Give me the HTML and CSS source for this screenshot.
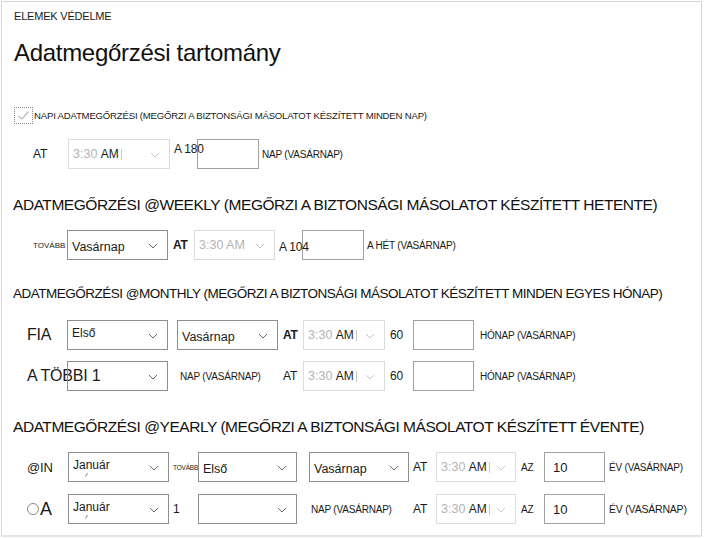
FILE: index.html
```html
<!DOCTYPE html>
<html lang="hu">
<head>
<meta charset="utf-8">
<title>Elemek védelme</title>
<link rel="stylesheet" href="styles.css">
</head>
<body>
<div class="panel">
  <div class="eyebrow">ELEMEK VÉDELME</div>
  <h1 class="title">Adatmegőrzési tartomány</h1>

  <div class="checkrow">
    <span class="checkbox"><svg width="13" height="11" viewBox="0 0 13 11"><path d="M1.5 6 L5 9 L11.5 1.5" fill="none" stroke="#b8b8b8" stroke-width="1.2"/></svg></span>
    <span class="small cb">NAPI ADATMEGŐRZÉSI (MEGŐRZI A BIZTONSÁGI MÁSOLATOT KÉSZÍTETT MINDEN NAP)</span>
  </div>

  <div class="row r1">
    <span class="lbl w35 x33">AT</span>
    <span class="sel dis w102"><span class="g">3:30</span>&nbsp;<span class="d">AM</span><span class="caret"></span><svg class="chev" width="10" height="6" viewBox="0 0 10 6"><path d="M1 1 L5 5 L9 1" fill="none" stroke="#c8c8c8" stroke-width="1"/></svg></span>
    <span class="lbl ml4 w23 up">A 180</span>
    <span class="inp w62"></span>
    <span class="small ml3">NAP (VASÁRNAP)</span>
  </div>

  <h2 class="sect big">ADATMEGŐRZÉSI @WEEKLY (MEGŐRZI A BIZTONSÁGI MÁSOLATOT KÉSZÍTETT HETENTE)</h2>

  <div class="row r2">
    <span class="tiny t8 w34 x33">TOVÁBB</span>
    <span class="sel w101 low"><span class="d">Vasárnap</span><svg class="chev" width="10" height="6" viewBox="0 0 10 6"><path d="M1 1 L5 5 L9 1" fill="none" stroke="#666" stroke-width="1"/></svg></span>
    <span class="lbl bold ml5 w21">AT</span>
    <span class="sel dis w81"><span class="g">3:30 AM</span><svg class="chev" width="10" height="6" viewBox="0 0 10 6"><path d="M1 1 L5 5 L9 1" fill="none" stroke="#c8c8c8" stroke-width="1"/></svg></span>
    <span class="lbl ml4 w23 dn">A 104</span>
    <span class="inp w62"></span>
    <span class="small ml3">A HÉT (VASÁRNAP)</span>
  </div>

  <h2 class="sect mid">ADATMEGŐRZÉSI @MONTHLY (MEGŐRZI A BIZTONSÁGI MÁSOLATOT KÉSZÍTETT MINDEN EGYES HÓNAP)</h2>

  <div class="row r3">
    <span class="lbl lg w40 x27">FIA</span>
    <span class="sel w101 top"><span class="d">Első</span><svg class="chev" width="10" height="6" viewBox="0 0 10 6"><path d="M1 1 L5 5 L9 1" fill="none" stroke="#666" stroke-width="1"/></svg></span>
    <span class="sel w101 ml9 low"><span class="d">Vasárnap</span><svg class="chev" width="10" height="6" viewBox="0 0 10 6"><path d="M1 1 L5 5 L9 1" fill="none" stroke="#666" stroke-width="1"/></svg></span>
    <span class="lbl bold ml5 w20">AT</span>
    <span class="sel dis w82"><span class="g">3:30</span>&nbsp;<span class="d">AM</span><span class="caret"></span><svg class="chev" width="10" height="6" viewBox="0 0 10 6"><path d="M1 1 L5 5 L9 1" fill="none" stroke="#c8c8c8" stroke-width="1"/></svg></span>
    <span class="lbl ml5 w23">60</span>
    <span class="inp w61"></span>
    <span class="small ml6">HÓNAP (VASÁRNAP)</span>
  </div>

  <div class="row r4">
    <span class="lbl lg w40 x27">A TÖBBI 1</span>
    <span class="sel w101"><svg class="chev" width="10" height="6" viewBox="0 0 10 6"><path d="M1 1 L5 5 L9 1" fill="none" stroke="#666" stroke-width="1"/></svg></span>
    <span class="small ml12 w103">NAP (VASÁRNAP)</span>
    <span class="lbl w20">AT</span>
    <span class="sel dis w82"><span class="g">3:30</span>&nbsp;<span class="d">AM</span><span class="caret"></span><svg class="chev" width="10" height="6" viewBox="0 0 10 6"><path d="M1 1 L5 5 L9 1" fill="none" stroke="#c8c8c8" stroke-width="1"/></svg></span>
    <span class="lbl ml5 w23">60</span>
    <span class="inp w61"></span>
    <span class="small ml6">HÓNAP (VASÁRNAP)</span>
  </div>

  <h2 class="sect big">ADATMEGŐRZÉSI @YEARLY (MEGŐRZI A BIZTONSÁGI MÁSOLATOT KÉSZÍTETT ÉVENTE)</h2>

  <div class="row r5">
    <span class="lbl w41 x27 l13">@IN</span>
    <span class="sel w101 top"><span class="d">Január</span><svg class="tick" width="3" height="4" viewBox="0 0 3 4"><path d="M2.5 0 L0.5 3.5" stroke="#666" stroke-width="0.8"/></svg><svg class="chev" width="10" height="6" viewBox="0 0 10 6"><path d="M1 1 L5 5 L9 1" fill="none" stroke="#666" stroke-width="1"/></svg></span>
    <span class="tiny ml4 w25">TOVÁBB</span>
    <span class="sel w99 low"><span class="d">Első</span><svg class="chev" width="10" height="6" viewBox="0 0 10 6"><path d="M1 1 L5 5 L9 1" fill="none" stroke="#666" stroke-width="1"/></svg></span>
    <span class="sel w100 ml12 low"><span class="d">Vasárnap</span><svg class="chev" width="10" height="6" viewBox="0 0 10 6"><path d="M1 1 L5 5 L9 1" fill="none" stroke="#666" stroke-width="1"/></svg></span>
    <span class="lbl ml4 w23">AT</span>
    <span class="sel dis w80"><span class="g">3:30</span>&nbsp;<span class="d">AM</span><span class="caret"></span><svg class="chev" width="10" height="6" viewBox="0 0 10 6"><path d="M1 1 L5 5 L9 1" fill="none" stroke="#c8c8c8" stroke-width="1"/></svg></span>
    <span class="small ml5 w23">AZ</span>
    <span class="inp w61 val">10</span>
    <span class="small ml4">ÉV (VASÁRNAP)</span>
  </div>

  <div class="row r6">
    <span class="radio x27"></span>
    <span class="lbl lg w28 ml1 l18">A</span>
    <span class="sel w101 top"><span class="d">Január</span><svg class="tick" width="3" height="4" viewBox="0 0 3 4"><path d="M2.5 0 L0.5 3.5" stroke="#666" stroke-width="0.8"/></svg><svg class="chev" width="10" height="6" viewBox="0 0 10 6"><path d="M1 1 L5 5 L9 1" fill="none" stroke="#666" stroke-width="1"/></svg></span>
    <span class="lbl ml4 w25">1</span>
    <span class="sel w99"><svg class="chev" width="10" height="6" viewBox="0 0 10 6"><path d="M1 1 L5 5 L9 1" fill="none" stroke="#666" stroke-width="1"/></svg></span>
    <span class="small ml14 w102">NAP (VASÁRNAP)</span>
    <span class="lbl w23">AT</span>
    <span class="sel dis w80"><span class="g">3:30</span>&nbsp;<span class="d">AM</span><span class="caret"></span><svg class="chev" width="10" height="6" viewBox="0 0 10 6"><path d="M1 1 L5 5 L9 1" fill="none" stroke="#c8c8c8" stroke-width="1"/></svg></span>
    <span class="small ml5 w23">AZ</span>
    <span class="inp w61 val">10</span>
    <span class="small ml4 big11">ÉV (VASÁRNAP)</span>
  </div>
</div>
</body>
</html>
```

FILE: styles.css
```css
* { box-sizing: border-box; }
html, body { margin: 0; padding: 0; background: #fff; }
body {
  font-family: "Liberation Sans", Arial, sans-serif;
  color: #1a1a1a;
  width: 704px;
  height: 538px;
  overflow: hidden;
}
.panel {
  margin: 1px 0 0 1px;
  width: 701px;
  height: 536px;
  border: 1px solid #d6d6d6;
  border-bottom: 2px solid #e4e4e4;
  padding-left: 11px;
}
.eyebrow {
  height: 28px;
  line-height: 28px;
  font-size: 11px;
  letter-spacing: -0.2px;
  color: #1a1a1a;
  padding-left: 1px;
}
.title {
  margin: 0;
  height: 46px;
  line-height: 46px;
  font-size: 24px;
  font-weight: normal;
  letter-spacing: -0.3px;
  padding-left: 1px;
  color: #111;
}
.checkrow {
  margin-top: 24px;
  height: 30px;
  display: flex;
  align-items: center;
}
.checkbox {
  width: 19px;
  height: 17px;
  border: 1px dotted #8c8c8c;
  margin-left: 1px;
  margin-right: 1px;
  display: flex;
  align-items: center;
  justify-content: center;
}
.small {
  font-size: 10px;
  letter-spacing: -0.2px;
  white-space: nowrap;
  color: #1a1a1a;
}
.small.cb { font-size: 9.6px; }
.tiny {
  font-size: 6.5px;
  letter-spacing: -0.2px;
  white-space: nowrap;
}
.tiny.t8 { font-size: 8px; letter-spacing: 0; }
.row {
  display: flex;
  align-items: center;
  height: 30px;
}
.r1 { margin-top: 9px; }
.r2 { margin-top: 10px; }
.r3 { margin-top: 11px; }
.r4 { margin-top: 11px; }
.r5 { margin-top: 10px; }
.r6 { margin-top: 12px; }
.sect {
  margin: 0;
  font-weight: normal;
  height: 30px;
  line-height: 30px;
  white-space: nowrap;
  color: #111;
}
.big { font-size: 15.5px; letter-spacing: -0.45px; margin-top: 21px; }
.mid { font-size: 13.5px; letter-spacing: -0.5px; margin-top: 19px; }
.lbl {
  font-size: 12px;
  white-space: nowrap;
  letter-spacing: -0.2px;
}
.lbl.lg { font-size: 16px; letter-spacing: -0.2px; }
.lbl.l13 { font-size: 13px; }
.lbl.l18 { font-size: 18px; }
.bold { font-weight: bold; }
.up { position: relative; top: -5px; }
.dn { position: relative; top: 2px; }
.sel {
  height: 30px;
  border: 1px solid #8f8f8f;
  display: flex;
  align-items: center;
  padding-left: 4px;
  font-size: 12.5px;
  position: relative;
  background: transparent;
  white-space: nowrap;
  flex: none;
}
.sel.low { padding-top: 3px; }
.sel.top { align-items: flex-start; padding-top: 5px; font-size: 12px; }
.sel.dis { border-color: #dcdcdc; }
.sel .g { color: #b4b4b4; }
.sel .d { color: #1a1a1a; }
.sel.dis .g + .d { font-size: 12px; }
.caret {
  width: 1px;
  height: 11px;
  background: #c8c8c8;
  margin-left: 2px;
}
.chev {
  position: absolute;
  right: 9px;
  top: 12px;
}
.tick {
  position: absolute;
  left: 16px;
  top: 20px;
}
.inp {
  height: 30px;
  border: 1px solid #a0a0a0;
  flex: none;
  display: flex;
  align-items: center;
  padding-left: 8px;
  font-size: 13px;
}
.radio {
  width: 12px;
  height: 12px;
  border: 1px solid #8a8a8a;
  border-radius: 50%;
  flex: none;
}
.x33 { margin-left: 20px; }
.x27 { margin-left: 14px; }
.w20 { width: 20px; flex: none; }
.w21 { width: 21px; flex: none; }
.w23 { width: 23px; flex: none; }
.w25 { width: 25px; flex: none; }
.w28 { width: 28px; flex: none; }
.w34 { width: 34px; flex: none; }
.w35 { width: 35px; flex: none; }
.w40 { width: 40px; flex: none; }
.w41 { width: 41px; flex: none; }
.w61 { width: 61px; }
.w62 { width: 62px; }
.w80 { width: 80px; }
.w81 { width: 81px; }
.w82 { width: 82px; }
.w99 { width: 99px; }
.w100 { width: 100px; }
.w101 { width: 101px; }
.w102 { width: 102px; }
.w103 { width: 103px; flex: none; }
.ml1 { margin-left: 1px; }
.ml3 { margin-left: 3px; }
.ml4 { margin-left: 4px; }
.ml5 { margin-left: 5px; }
.ml6 { margin-left: 6px; }
.ml9 { margin-left: 9px; }
.ml12 { margin-left: 12px; }
.ml14 { margin-left: 14px; }
.big11 { font-size: 10.5px; }
```
